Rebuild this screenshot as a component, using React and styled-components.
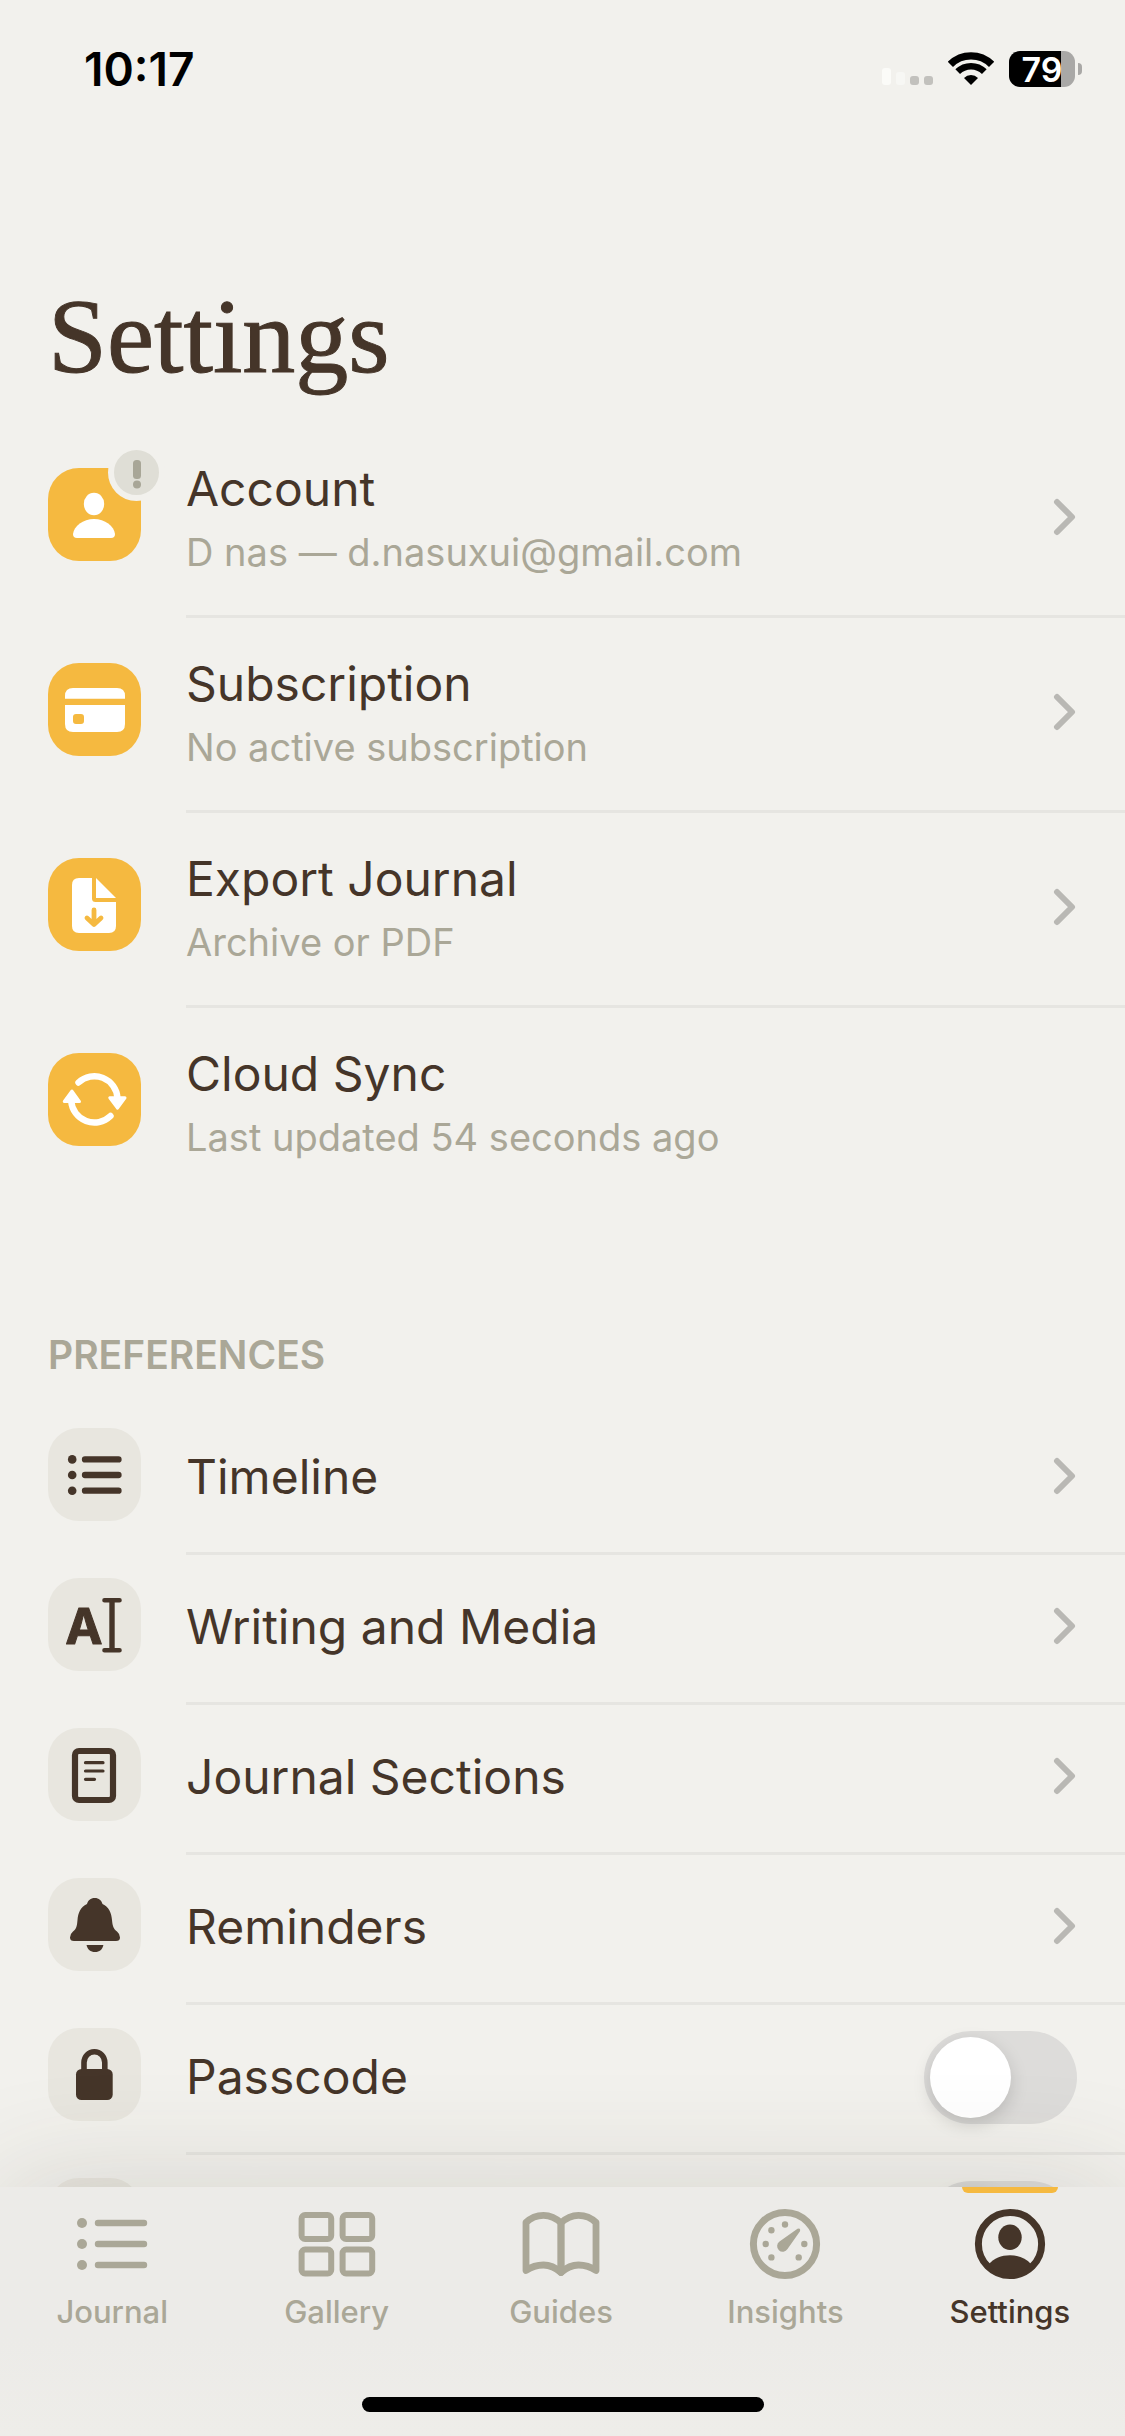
import React, { useState } from "react";
import styled, { createGlobalStyle } from "styled-components";

const colors = {
  page: "#f2f1ed",
  ink: "#453529",
  muted: "#aaa797",
  line: "#e6e5e1",
  accent: "#f5b940",
  tile: "#e8e6df",
  chevron: "#b9b8b4",
  bar: "#ecebe8",
  badge: "#dfded6",
};

const GlobalStyle = createGlobalStyle`
  *, *::before, *::after { box-sizing: border-box; }
  body {
    margin: 0;
    background: ${colors.page};
    color: ${colors.ink};
    font-family: Inter, "Liberation Sans", sans-serif;
  }
`;

const Screen = styled.div`
  display: flex;
  flex-direction: column;
  height: 100vh;
  overflow: hidden;
`;

const StatusBar = styled.header`
  flex: none;
  display: flex;
  align-items: center;
  justify-content: space-between;
  height: 138px;
  padding: 0 43px 0 84px;
  color: #000;
`;

const Clock = styled.time`
  font-size: 46px;
  line-height: 54px;
  font-weight: 600;
`;

const StatusIcons = styled.div`
  display: flex;
  align-items: center;
  gap: 15px;
`;

const Battery = styled.div`
  display: flex;
  align-items: center;
  gap: 3px;
`;

const BatteryBody = styled.div`
  width: 66px;
  height: 36px;
  border-radius: 11px;
  background: linear-gradient(to right, #000 79%, #a9a8a6 79%);
  color: #fff;
  font-size: 34px;
  line-height: 37px;
  font-weight: 600;
  text-align: center;
`;

const BatteryTip = styled.div`
  width: 4px;
  height: 12px;
  border-radius: 0 4px 4px 0;
  background: #a9a8a6;
`;

const Content = styled.main`
  flex: 1;
  min-height: 0;
  overflow-y: auto;
  scrollbar-width: none;
`;

const PageTitle = styled.h1`
  margin: 0;
  padding: 139px 48px 26px;
  font-family: "Liberation Serif", serif;
  font-size: 106px;
  line-height: 120px;
  font-weight: 400;
  -webkit-text-stroke: 1px ${colors.ink};
`;

const SectionTitle = styled.h2`
  margin: 0;
  padding: 128px 48px 26px;
  color: ${colors.muted};
  font-size: 39px;
  line-height: 48px;
  font-weight: 600;
`;

const List = styled.ul`
  margin: 0;
  padding: 0;
  list-style: none;
`;

const Row = styled.li`
  display: flex;
  gap: 45px;
  padding-left: 48px;
`;

const Tile = styled.span`
  position: relative;
  flex: none;
  width: 93px;
  height: 93px;
  margin-top: ${(p) => (p.$accent ? 45 : 23)}px;
  border-radius: 31px;
  background: ${(p) => (p.$accent ? colors.accent : colors.tile)};
  color: ${(p) => (p.$accent ? "#fff" : colors.ink)};
`;

const TileIcon = styled.svg`
  display: block;
  width: 93px;
  height: 93px;
`;

const Badge = styled.span`
  position: absolute;
  top: -24px;
  right: -24px;
  width: 57px;
  height: 57px;
  border: 6px solid ${colors.page};
  border-radius: 50%;
  background: ${colors.badge};
`;

const RowLink = styled.a`
  flex: 1;
  display: flex;
  align-items: center;
  justify-content: space-between;
  min-height: ${(p) => (p.$tall ? 195 : 150)}px;
  padding: 0 48px 3px 0;
  border: 0;
  border-bottom: 3px solid ${(p) => (p.$last ? "transparent" : colors.line)};
  background: none;
  color: inherit;
  font: inherit;
  text-align: left;
  text-decoration: none;
`;

const RowText = styled.span`
  display: flex;
  flex-direction: column;
  gap: 9px;
`;

const RowTitle = styled.span`
  font-size: 48px;
  line-height: 60px;
`;

const RowNote = styled.span`
  color: ${colors.muted};
  font-size: 38px;
  line-height: 48px;
`;

const ChevronIcon = styled.svg`
  flex: none;
  width: 24px;
  height: 38px;
  margin-bottom: 2px;
`;

const Switch = styled.input`
  appearance: none;
  flex: none;
  width: 153px;
  height: 93px;
  margin: 0;
  padding: 6px;
  border-radius: 47px;
  background: ${(p) => (p.checked ? colors.accent : "#dddcda")};

  &::before {
    content: "";
    display: block;
    width: 81px;
    height: 81px;
    margin-left: ${(p) => (p.checked ? 60 : 0)}px;
    border-radius: 50%;
    background: #fff;
    box-shadow: 0 6px 18px rgba(0, 0, 0, 0.15);
  }
`;

const TabBar = styled.nav`
  position: relative;
  flex: none;
  background: linear-gradient(${colors.bar} 60%, #eeede9);
  box-shadow: 0 0 120px rgba(60, 55, 40, 0.16);
`;

const Tabs = styled.div`
  display: flex;
  padding-right: 3px;
`;

const Tab = styled.a`
  flex: 1;
  display: flex;
  flex-direction: column;
  align-items: center;
  color: ${(p) => (p.$active ? colors.ink : colors.muted)};
  font-size: 31px;
  line-height: 36px;
  font-weight: 500;
  text-decoration: none;
`;

const TabMarker = styled.span`
  width: 96px;
  height: 6px;
  margin-bottom: 15px;
  border-radius: 0 0 6px 6px;
  background: ${(p) => (p.$active ? colors.accent : "transparent")};
`;

const TabIcon = styled.svg`
  display: block;
  width: 90px;
  height: 72px;
  margin-bottom: 14px;
`;

const HomeIndicator = styled.div`
  width: 402px;
  height: 15px;
  margin: 67px auto 24px;
  border-radius: 8px;
  background: #000;
`;

function SignalGlyph() {
  return (
    <svg width="51" height="34" viewBox="0 0 51 34" aria-hidden="true">
      <rect x="0" y="16" width="9" height="17" rx="3" fill="#fbfbf8" />
      <rect x="14" y="20" width="9" height="13" rx="3" fill="#f7f7f4" />
      <rect x="28" y="24" width="9" height="9" rx="3" fill="#c2c1bd" />
      <rect x="42" y="24" width="9" height="9" rx="3" fill="#c2c1bd" />
    </svg>
  );
}

function WifiGlyph() {
  return (
    <svg width="46" height="34" viewBox="0 0 46 34" aria-hidden="true">
      <g fill="none" stroke="#000">
        <path d="M2.4 12.4A29.2 29.2 0 0 1 43.6 12.4" strokeWidth="7.4" />
        <path d="M9.7 19.7A18.8 18.8 0 0 1 36.3 19.7" strokeWidth="6.6" />
      </g>
      <path d="M23 33L16 26A9.9 9.9 0 0 1 30 26Z" fill="#000" />
    </svg>
  );
}

function Chevron() {
  return (
    <ChevronIcon viewBox="0 0 24 38" aria-hidden="true">
      <path
        d="M4 4L19 19L4 34"
        fill="none"
        stroke={colors.chevron}
        strokeWidth="6"
        strokeLinecap="round"
        strokeLinejoin="round"
      />
    </ChevronIcon>
  );
}

const tileArt = {
  account: (
    <g fill="currentColor">
      <ellipse cx="46" cy="36" rx="10.2" ry="11.2" />
      <path d="M29 70Q25 70 25 66C26 58 35 51 46 51S66 58 67 66Q67 70 63 70Z" />
    </g>
  ),
  card: (
    <g fill="currentColor">
      <path d="M17 35.7V33Q17 25 25 25H69Q77 25 77 33V35.7Z" />
      <path
        fillRule="evenodd"
        d="M17 42H77V61Q77 69 69 69H25Q17 69 17 61ZM28 51Q25 51 25 54V58Q25 61 28 61H33Q36 61 36 58V54Q36 51 33 51Z"
      />
    </g>
  ),
  exportFile: (
    <g>
      <path
        fill="currentColor"
        d="M31 20H44V40.5Q44 44 47.5 44H68V68Q68 75 61 75H31Q24 75 24 68V27Q24 20 31 20Z"
      />
      <path fill="currentColor" d="M48 20L68 40H48Z" />
      <path
        d="M46 52V66M39 60L46 66.5L53 60"
        fill="none"
        stroke={colors.accent}
        strokeWidth="4.8"
        strokeLinecap="round"
        strokeLinejoin="round"
      />
    </g>
  ),
  sync: (
    <g>
      <g fill="none" stroke="currentColor" strokeWidth="6.4" strokeLinecap="round">
        <path d="M30.5 29.5A23.2 23.2 0 0 1 69.5 45" />
        <path d="M23.2 48A23.2 23.2 0 0 0 62.5 63" />
      </g>
      <g fill="currentColor" stroke="currentColor" strokeWidth="3" strokeLinejoin="round">
        <path d="M61.8 44.8H77L69.5 55.2Z" />
        <path d="M16.3 48.5H31.5L24 38Z" />
      </g>
    </g>
  ),
  timeline: (
    <g fill="currentColor" stroke="currentColor">
      <g stroke="none">
        <circle cx="24.2" cy="31.4" r="4.3" />
        <circle cx="24.2" cy="47" r="4.3" />
        <circle cx="24.2" cy="62.7" r="4.3" />
      </g>
      <path d="M37 31.4H70.5M37 47H70.5M37 62.7H70.5" strokeWidth="6.3" strokeLinecap="round" />
    </g>
  ),
  writing: (
    <g>
      <text
        x="36"
        y="66"
        textAnchor="middle"
        fontFamily="Inter, sans-serif"
        fontSize="50"
        fontWeight="700"
        fill="currentColor"
        stroke="currentColor"
        strokeWidth="1"
        strokeLinejoin="round"
      >
        A
      </text>
      <g fill="none" stroke="currentColor" strokeLinecap="round">
        <path d="M56.5 22.3H71.5M56.5 72.3H71.5" strokeWidth="4.6" />
        <path d="M64 23V72" strokeWidth="5.4" strokeLinecap="butt" />
      </g>
    </g>
  ),
  sections: (
    <g fill="none" stroke="currentColor">
      <rect x="27" y="23" width="38" height="49" rx="4" strokeWidth="6.2" />
      <path d="M37.5 34.7H55M37.5 43H55M37.5 51.3H46.5" strokeWidth="3.2" strokeLinecap="round" />
    </g>
  ),
  bell: (
    <g fill="currentColor">
      <path d="M46.7 20C51 20 53.5 22.5 54.5 26C61 29 63.5 35 64 42C64.5 48 65.5 51 69 53.5Q72 56 72 59.5Q72 63 68 63H26Q22 63 22 59.5Q22 56 25 53.5C28.5 51 29 48 29.5 42C30 35 32.5 29 39 26C40 22.5 42.5 20 46.7 20Z" />
      <path d="M38.5 67H55.4C54.5 71.5 51.5 74 47 74S39.5 71.5 38.5 67Z" />
    </g>
  ),
  lock: (
    <g>
      <rect x="28" y="41" width="36.7" height="31" rx="5.5" fill="currentColor" />
      <path
        d="M36 43V34.5A10.4 10.8 0 0 1 56.8 34.5V43"
        fill="none"
        stroke="currentColor"
        strokeWidth="5.6"
      />
    </g>
  ),
  blank: null,
};

const tabArt = {
  journal: (
    <g fill="currentColor">
      <circle cx="15" cy="15" r="5" />
      <circle cx="15" cy="36" r="5" />
      <circle cx="15" cy="57" r="5" />
      <path d="M31 15H77M31 36H77M31 57H77" stroke="currentColor" strokeWidth="6.4" strokeLinecap="round" />
    </g>
  ),
  gallery: (
    <g fill="none" stroke="currentColor" strokeWidth="6">
      <rect x="9.6" y="7" width="29.6" height="24" rx="3.5" />
      <rect x="50.6" y="7" width="29.6" height="24" rx="3.5" />
      <rect x="9.6" y="41.5" width="29.6" height="24" rx="3.5" />
      <rect x="50.6" y="41.5" width="29.6" height="24" rx="3.5" />
    </g>
  ),
  guides: (
    <g fill="none" stroke="currentColor" strokeWidth="6.8" strokeLinejoin="round">
      <path d="M10 62.5V14.5C15 9.5 21 7.3 27.5 7.3S40 10 45 15V64.5C40 60 34 57 27.5 57S15 59 10 62.5Z" />
      <path d="M80 62.5V14.5C75 9.5 69 7.3 62.5 7.3S50 10 45 15V64.5C50 60 56 57 62.5 57S75 59 80 62.5Z" />
    </g>
  ),
  insights: (
    <g fill="currentColor">
      <circle cx="45" cy="36" r="31.6" fill="none" stroke="currentColor" strokeWidth="7" />
      <circle cx="45" cy="16.5" r="3.2" />
      <circle cx="31.4" cy="22.2" r="3.2" />
      <circle cx="25.7" cy="36" r="3.2" />
      <circle cx="64.3" cy="36" r="3.2" />
      <circle cx="31.4" cy="49.4" r="3.2" />
      <circle cx="58.7" cy="49.4" r="3.2" />
      <path d="M39.5 33.5L57.5 20.8Q60.8 19.5 60 23.2L47.5 41A5.6 5.6 0 1 1 39.5 33.5Z" />
    </g>
  ),
  settings: (
    <g fill="currentColor">
      <circle cx="45" cy="36" r="31.6" fill="none" stroke="currentColor" strokeWidth="7" />
      <ellipse cx="45" cy="29.2" rx="11.7" ry="12.8" />
      <path d="M24 56C29 50.5 36 47.3 45 47.3S61 50.5 66 56Q58 67 45 67T24 56Z" />
    </g>
  ),
};

const accountRows = [
  { id: "account", icon: "account", title: "Account", note: "D nas — d.nasuxui@gmail.com", badge: true },
  { id: "subscription", icon: "card", title: "Subscription", note: "No active subscription" },
  { id: "export", icon: "exportFile", title: "Export Journal", note: "Archive or PDF" },
];

const preferenceRows = [
  { id: "timeline", icon: "timeline", title: "Timeline" },
  { id: "writing", icon: "writing", title: "Writing and Media" },
  { id: "sections", icon: "sections", title: "Journal Sections" },
  { id: "reminders", icon: "bell", title: "Reminders" },
];

const tabs = [
  { id: "journal", label: "Journal" },
  { id: "gallery", label: "Gallery" },
  { id: "guides", label: "Guides" },
  { id: "insights", label: "Insights" },
  { id: "settings", label: "Settings" },
];

function IconTile({ icon, accent, badge }) {
  return (
    <Tile $accent={accent}>
      <TileIcon viewBox="0 0 93 93" aria-hidden="true">
        {tileArt[icon]}
      </TileIcon>
      {badge && (
        <Badge>
          <svg width="45" height="45" viewBox="0 0 45 45" aria-hidden="true">
            <rect x="19" y="10" width="8" height="19" rx="3.5" fill="#a8a697" />
            <circle cx="23" cy="34.5" r="4" fill="#a8a697" />
          </svg>
        </Badge>
      )}
    </Tile>
  );
}

function LinkRow({ id, icon, title, note, badge }) {
  return (
    <Row>
      <IconTile icon={icon} accent={Boolean(note)} badge={badge} />
      <RowLink href={`#${id}`} $tall={Boolean(note)}>
        <RowText>
          <RowTitle>{title}</RowTitle>
          {note && <RowNote>{note}</RowNote>}
        </RowText>
        <Chevron />
      </RowLink>
    </Row>
  );
}

function SwitchRow({ id, icon, title, name }) {
  const [on, setOn] = useState(false);
  return (
    <Row>
      <IconTile icon={icon} />
      <RowLink as="label" htmlFor={id}>
        <RowTitle>{title}</RowTitle>
        <Switch
          id={id}
          type="checkbox"
          role="switch"
          aria-label={name}
          checked={on}
          onChange={(event) => setOn(event.target.checked)}
        />
      </RowLink>
    </Row>
  );
}

export default function App() {
  return (
    <Screen>
      <GlobalStyle />
      <StatusBar>
        <Clock>10:17</Clock>
        <StatusIcons>
          <SignalGlyph />
          <WifiGlyph />
          <Battery>
            <BatteryBody>79</BatteryBody>
            <BatteryTip />
          </Battery>
        </StatusIcons>
      </StatusBar>

      <Content>
        <PageTitle>Settings</PageTitle>
        <List>
          {accountRows.map((row) => (
            <LinkRow key={row.id} {...row} />
          ))}
          <Row>
            <IconTile icon="sync" accent />
            <RowLink as="button" type="button" $tall $last>
              <RowText>
                <RowTitle>Cloud Sync</RowTitle>
                <RowNote>Last updated 54 seconds ago</RowNote>
              </RowText>
            </RowLink>
          </Row>
        </List>

        <SectionTitle>PREFERENCES</SectionTitle>
        <List>
          {preferenceRows.map((row) => (
            <LinkRow key={row.id} {...row} />
          ))}
          <SwitchRow id="passcode" icon="lock" title="Passcode" />
          <SwitchRow id="unlock" icon="blank" name="Biometric unlock" />
        </List>
      </Content>

      <TabBar>
        <Tabs>
          {tabs.map(({ id, label }) => {
            const active = id === "settings";
            return (
              <Tab key={id} href={`#${id}`} $active={active} aria-current={active ? "page" : undefined}>
                <TabMarker $active={active} />
                <TabIcon viewBox="0 0 90 72" aria-hidden="true">
                  {tabArt[id]}
                </TabIcon>
                {label}
              </Tab>
            );
          })}
        </Tabs>
        <HomeIndicator />
      </TabBar>
    </Screen>
  );
}
